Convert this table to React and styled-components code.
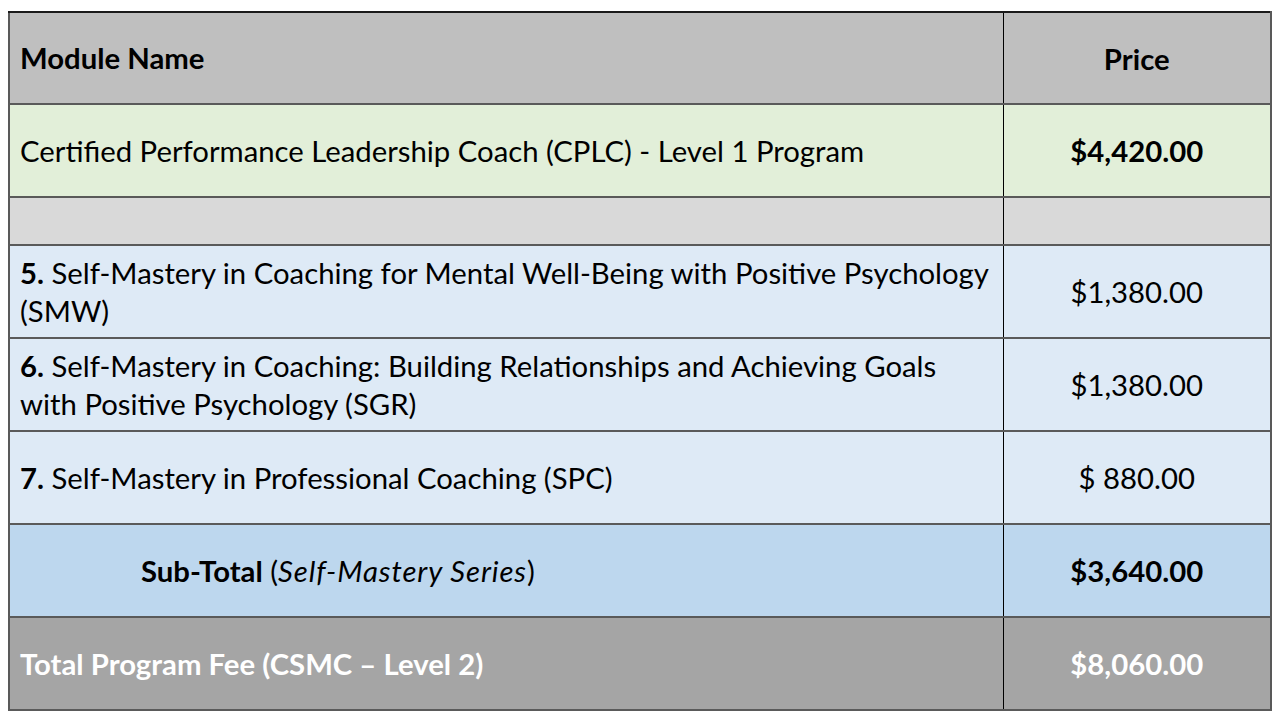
import React from 'react'
import styled, { createGlobalStyle } from 'styled-components'

const GlobalStyle = createGlobalStyle`
  html, body {
    margin: 0;
    padding: 0;
    background: #ffffff;
  }
  body {
    font-family: Lato, 'Liberation Sans', sans-serif;
    color: #000000;
  }
`

const Page = styled.div`
  width: 1280px;
  height: 720px;
  padding: 11px 8px 0 8px;
  box-sizing: border-box;
  background: #ffffff;
`

const Table = styled.table`
  width: 1264px;
  border-collapse: collapse;
  table-layout: fixed;
  border-left: 2px solid #595959;
  border-right: 2px solid #595959;
  border-top: 2px solid #1a1a1a;
  border-bottom: 2px solid #595959;
`

const Row = styled.tr`
  background: ${(p) => p.$bg};
  height: ${(p) => p.$h}px;
  border-bottom: 2px solid #5a5a5a;
  color: ${(p) => (p.$light ? '#ffffff' : '#000000')};
`

const NameCell = styled.td`
  width: 994px;
  box-sizing: border-box;
  padding: 0 8px 0 ${(p) => p.$indent || 10}px;
  border-right: 1px solid #000000;
  font-size: 29.3px;
  line-height: 38px;
  font-weight: ${(p) => (p.$bold ? 700 : 400)};
  vertical-align: middle;
  white-space: nowrap;
`

const PriceCell = styled.td`
  text-align: center;
  font-size: 29.3px;
  font-weight: ${(p) => (p.$bold ? 700 : 400)};
  vertical-align: middle;
`

const Num = styled.b`
  font-weight: 700;
`

const Note = styled.i`
  font-style: italic;
  letter-spacing: 0.9px;
`

export default function App() {
  return (
    <>
      <GlobalStyle />
      <Page>
        <Table>
          <tbody>
            <Row $bg="#bfbfbf" $h={92}>
              <NameCell $bold>Module Name</NameCell>
              <PriceCell $bold>Price</PriceCell>
            </Row>
            <Row $bg="#e2efd9" $h={93}>
              <NameCell>Certified Performance Leadership Coach (CPLC) - Level 1 Program</NameCell>
              <PriceCell $bold>$4,420.00</PriceCell>
            </Row>
            <Row $bg="#d9d9d9" $h={48}>
              <NameCell />
              <PriceCell />
            </Row>
            <Row $bg="#deeaf6" $h={93}>
              <NameCell>
                <Num>5.</Num> Self-Mastery in Coaching for Mental Well-Being with Positive Psychology
                <br />
                (SMW)
              </NameCell>
              <PriceCell>$1,380.00</PriceCell>
            </Row>
            <Row $bg="#deeaf6" $h={93}>
              <NameCell>
                <Num>6.</Num> Self-Mastery in Coaching: Building Relationships and Achieving Goals
                <br />
                with Positive Psychology (SGR)
              </NameCell>
              <PriceCell>$1,380.00</PriceCell>
            </Row>
            <Row $bg="#deeaf6" $h={93}>
              <NameCell>
                <Num>7.</Num> Self-Mastery in Professional Coaching (SPC)
              </NameCell>
              <PriceCell>$ 880.00</PriceCell>
            </Row>
            <Row $bg="#bdd7ee" $h={93}>
              <NameCell $indent={131}>
                <Num>Sub-Total</Num> (<Note>Self-Mastery Series</Note>)
              </NameCell>
              <PriceCell $bold>$3,640.00</PriceCell>
            </Row>
            <Row $bg="#a5a5a5" $h={93} $light>
              <NameCell $bold>Total Program Fee (CSMC – Level 2)</NameCell>
              <PriceCell $bold>$8,060.00</PriceCell>
            </Row>
          </tbody>
        </Table>
      </Page>
    </>
  )
}
